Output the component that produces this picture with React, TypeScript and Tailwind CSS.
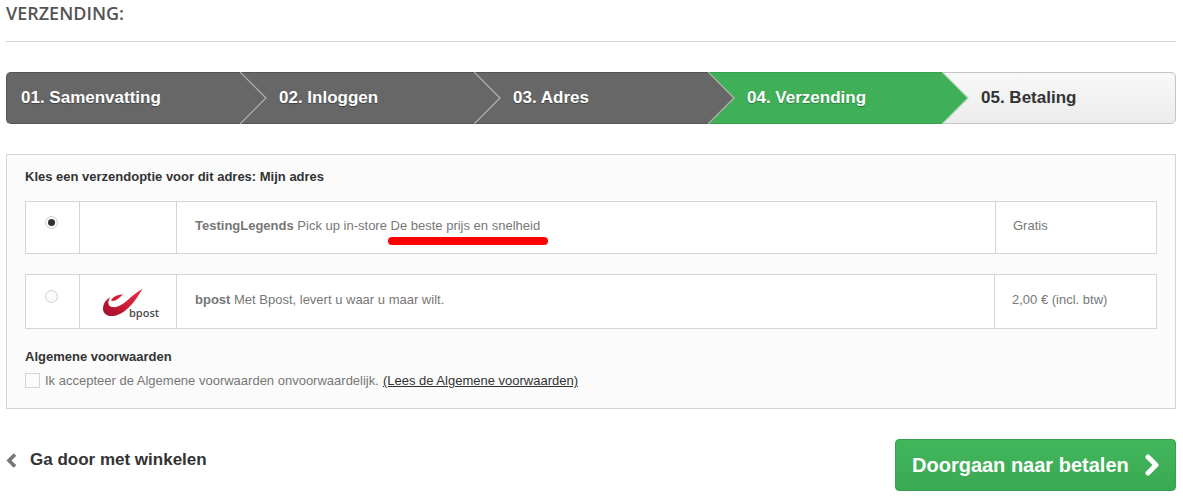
const arial = "font-['Liberation_Sans',Arial,sans-serif]";

function Arrow({ fill, line }: { fill: string; line: string }) {
  return (
    <svg className="absolute left-full -top-px z-10" width="28" height="52" viewBox="0 0 28 52">
      <polygon points="0,0 26,26 0,52" fill={fill} />
      <polyline points="0,0 26,26 0,52" fill="none" stroke={line} strokeWidth="1.2" />
    </svg>
  );
}

function Step({ label, first }: { label: string; first?: boolean }) {
  return (
    <div
      className={`relative flex h-[52px] w-[234px] items-center border-y border-[#555454] bg-[#686767] text-[17px] font-bold text-white [text-shadow:0_1px_1px_rgba(0,0,0,0.4)] ${
        first ? "rounded-l-[5px] border-l pl-[14px]" : "pl-[39px]"
      }`}
    >
      {label}
      <Arrow fill="#686767" line="#b4b4b4" />
    </div>
  );
}

function BpostLogo() {
  return (
    <div className="relative h-[34px] w-[60px]">
      <svg className="absolute left-[2px] top-[1px]" width="47" height="33" viewBox="300 400 140 100">
        <defs>
          <linearGradient id="bp" x1="0" y1="1" x2="1" y2="0">
            <stop offset="0" stopColor="#9c1028" />
            <stop offset="0.5" stopColor="#cf1d38" />
            <stop offset="1" stopColor="#e8304a" />
          </linearGradient>
        </defs>
        <path
          d="M428 408 C408 440 385 478 345 490 C322 495 306 484 308 465 C310 450 318 440 330 434 C322 446 322 458 332 463 C352 470 375 450 392 434 C405 423 417 415 428 408 Z"
          fill="url(#bp)"
        />
        <path d="M369 425 C355 426 340 430 332 443 C340 449 352 442 369 425 Z" fill="#d11f3a" />
      </svg>
      <span className="absolute left-[31px] top-[21px] font-['Open_Sans',sans-serif] text-[11px] font-semibold leading-[13px] text-[#4a4a4a]">
        bpost
      </span>
    </div>
  );
}

function Radio({ checked }: { checked?: boolean }) {
  return (
    <span className="flex h-[13px] w-[13px] items-center justify-center rounded-full border border-[#d0d0d0] bg-[#fbfbfb]">
      {checked && <span className="h-[7px] w-[7px] rounded-full bg-[#333333]" />}
    </span>
  );
}

export default function App() {
  return (
    <div className={`h-[504px] w-[1183px] overflow-hidden bg-white pl-[6px] pr-[7px] ${arial}`}>
      <h1 className="h-[42px] border-b border-[#d6d4d4] pt-px font-['Open_Sans',sans-serif] text-[18px] font-semibold leading-[24px] text-[#555454]">
        VERZENDING:
      </h1>

      {/* Steps */}
      <div className="mt-[30px] flex">
        <Step first label="01. Samenvatting" />
        <Step label="02. Inloggen" />
        <Step label="03. Adres" />
        <div className="relative flex h-[52px] w-[234px] items-center border-y border-[#36a04e] bg-[#3fb058] pl-[39px] text-[17px] font-bold text-white [text-shadow:0_1px_1px_rgba(0,0,0,0.3)]">
          04. Verzending
          <Arrow fill="#3fb058" line="#a8d6b2" />
        </div>
        <div className="flex h-[52px] w-[234px] items-center rounded-r-[5px] border border-l-0 border-[#c4c4c4] bg-gradient-to-b from-[#f8f8f8] to-[#ececec] pl-[39px] text-[17px] font-bold text-[#333333]">
          05. Betaling
        </div>
      </div>

      {/* Options */}
      <div className="mt-[30px] h-[255px] border border-[#d6d4d4] bg-[#fbfbfb] px-[18px] pt-[14px]">
        <p className="text-[13px] font-bold leading-[16px] text-[#333333]">
          Kles een verzendoptie voor dit adres: Mijn adres
        </p>

        <div className="relative mt-[16px] flex h-[53px] border border-[#d6d4d4] bg-white text-[13px] text-[#777777]">
          <div className="flex w-[53px] justify-center pr-[2px] pt-[14px]">
            <Radio checked />
          </div>
          <div className="w-[97px] border-l border-[#d6d4d4]" />
          <div className="flex w-[819px] items-center border-l border-[#d6d4d4] pb-[4px] pl-[18px]">
            <p>
              <b>TestingLegends</b> Pick up in-store De beste prijs en snelheid
            </p>
          </div>
          <div className="flex flex-1 items-center border-l border-[#d6d4d4] pb-[4px] pl-[17px]">Gratis</div>
          <div className="absolute left-[362px] top-[35px] h-[8px] w-[160px] rounded-full bg-[#fe0000]" />
        </div>

        <div className="mt-[20px] flex h-[55px] border border-[#d6d4d4] bg-white text-[13px] text-[#777777]">
          <div className="flex w-[53px] justify-center pr-[2px] pt-[15px]">
            <Radio />
          </div>
          <div className="flex w-[97px] items-center justify-center border-l border-[#d6d4d4]">
            <BpostLogo />
          </div>
          <div className="flex w-[818px] items-center border-l border-[#d6d4d4] pb-[4px] pl-[18px]">
            <p>
              <b>bpost</b> Met Bpost, levert u waar u maar wilt.
            </p>
          </div>
          <div className="flex flex-1 items-center border-l border-[#d6d4d4] pb-[4px] pl-[17px]">2,00 € (incl. btw)</div>
        </div>

        <p className="mt-[20px] text-[13px] font-bold leading-[16px] text-[#333333]">Algemene voorwaarden</p>
        <div className="mt-[6px] flex items-center text-[13px] text-[#777777]">
          <span className="h-[15px] w-[15px] border border-[#d6d4d4] bg-[#fbfbfb]" />
          <span className="ml-[5px]">Ik accepteer de Algemene voorwaarden onvoorwaardelijk.</span>
          <a className="ml-[4px] text-[#333333] underline">(Lees de Algemene voorwaarden)</a>
        </div>
      </div>

      {/* Actions */}
      <div className="mt-[30px] flex items-start justify-between">
        <a className="mt-[11px] flex items-center text-[17px] font-bold leading-[20px] text-[#333333]">
          <svg width="11" height="15" viewBox="0 0 11 15">
            <polyline points="9,1.5 3,7.5 9,13.5" fill="none" stroke="#777777" strokeWidth="3.6" />
          </svg>
          <span className="ml-[13px]">Ga door met winkelen</span>
        </a>
        <a className="flex h-[52px] w-[281px] items-center rounded-[4px] border border-[#36a04e] bg-gradient-to-b from-[#43b65c] to-[#39a952] pl-[16px] text-[20px] font-bold text-white">
          Doorgaan naar betalen
          <svg className="ml-[16px]" width="15" height="22" viewBox="0 0 15 22">
            <polyline points="3,3 11,11 3,19" fill="none" stroke="#ffffff" strokeWidth="5" strokeLinecap="round" strokeLinejoin="round" />
          </svg>
        </a>
      </div>
    </div>
  );
}
